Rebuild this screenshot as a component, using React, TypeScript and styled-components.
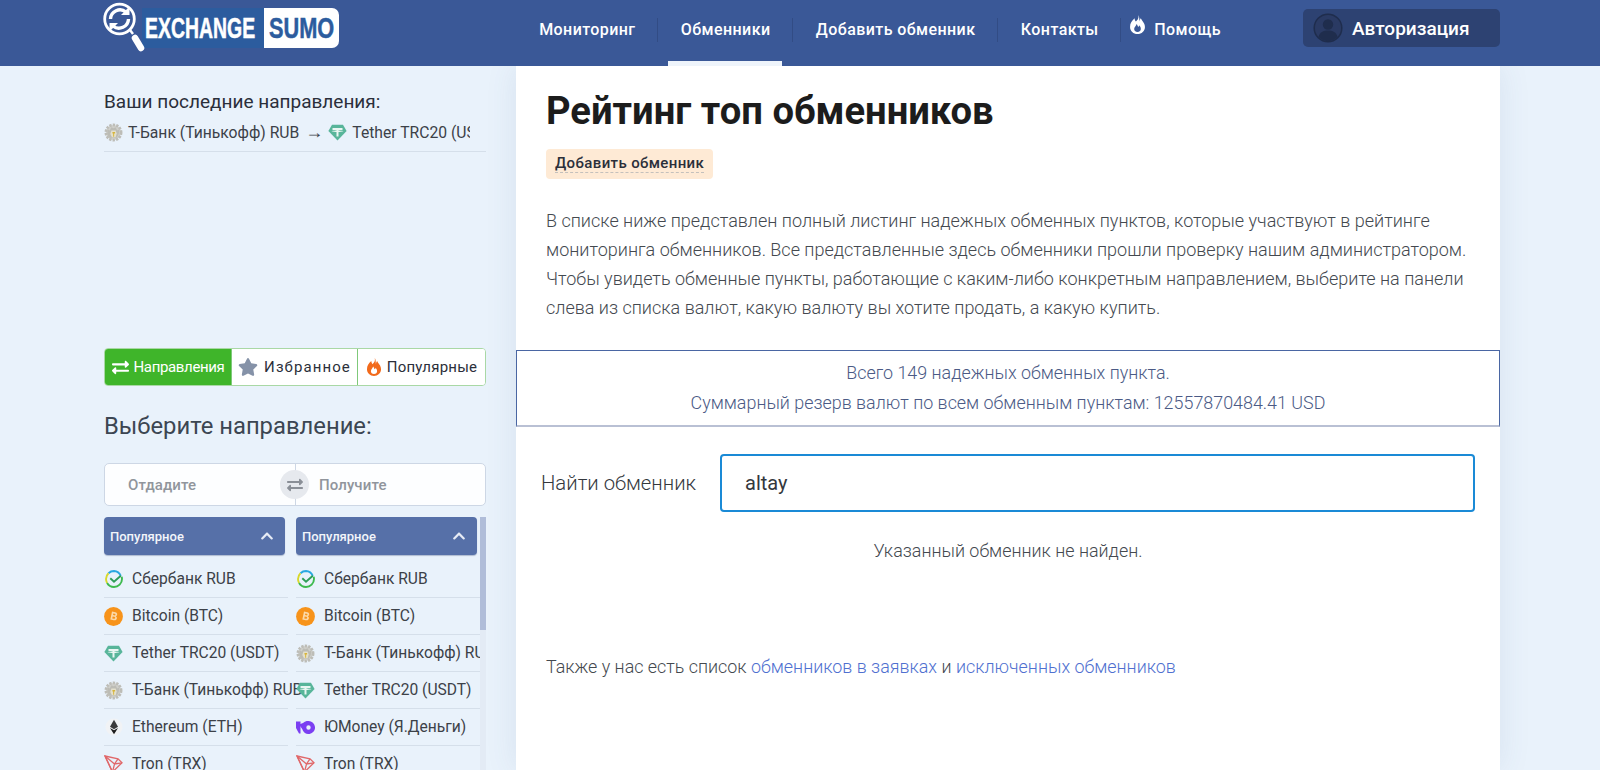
import React from "react";
import styled, { createGlobalStyle } from "styled-components";
import { FaExchangeAlt, FaStar, FaChevronUp } from "react-icons/fa";

const GlobalStyle = createGlobalStyle`
  html, body {
    margin: 0;
    padding: 0;
    height: 770px;
    overflow: hidden;
    background: #e9f2fb;
    font-family: Roboto, "Liberation Sans", sans-serif;
  }
  * { box-sizing: border-box; }
`;

const FireIcon = ({ size, color }: { size: number; color: string }) => (
  <svg width={size} height={size * 1.12} viewBox="3 1 18 23">
    <path
      fillRule="evenodd"
      fill={color}
      d="M13 1c1 4-1 6-3 8C9 7.500 8.500 6.500 8.500 5 5 8 3 11 3 15.500c0 5 4 8.500 9 8.500s9-3.500 9-8.500c0-5-3.500-7-5-10.500-1 1.500-1.500 2.500-1.500 4C14 6 14.500 3 13 1zM12 21.500c-2.500 0-4-1.500-4-3.500 0-2 2-3.500 3-6 1 1.500 1 2.500 2 3.500.5-.5 1-1 1-2 1.500 1.500 2 3 2 4.500 0 2-1.500 3.500-4 3.500z"
    />
  </svg>
);

const TinkoffIcon = () => (
  <svg width="19" height="19" viewBox="0 0 18 18">
    <circle cx="9" cy="9" r="7.200" fill="#cfcfca" stroke="#bdbdb7" strokeWidth="2.600" strokeDasharray="2.200 1.100" />
    <path d="M3.500 6l2 1L7 4l2 1 2-1 1.500 3 2-1-.5 4.500-2 3.500h-7l-2-3.500z" fill="#bcbcb5" />
    <path d="M7 7h4l1 3-1 3.500H7.500L6 10.500z" fill="#e4e0cc" />
    <path d="M8 8.500h2.500V10H9.600v3H8.700v-3H8z" fill="#d6b43a" />
  </svg>
);

const TetherIcon = () => (
  <svg width="19" height="17" viewBox="0 0 19 17">
    <path d="M4 .8h11l3.600 6.200L9.500 16.500.4 7z" fill="#58b59a" />
    <path d="M4.500 4h10v1.900h-4v6.600H8.500V5.900h-4z" fill="#eaf6f2" />
    <path d="M3.500 7.200c3-.8 9-.8 12 0-3 .9-9 .9-12 0z" fill="#eaf6f2" />
  </svg>
);

const SberIcon = () => (
  <svg width="18" height="18" viewBox="0 0 18 18" fill="none">
    <path d="M15.800 5.800A8 8 0 0 0 9 1a8 8 0 0 0-5.500 2.200" stroke="#2aa8e0" strokeWidth="1.900" />
    <path d="M3.500 3.200A8 8 0 0 0 1 9c0 1.500.4 2.900 1.100 4" stroke="#d8d82c" strokeWidth="1.900" />
    <path d="M2.100 13A8 8 0 0 0 9 17a8 8 0 0 0 8-8c0-.8-.1-1.500-.3-2.200" stroke="#3dba4e" strokeWidth="1.900" />
    <path d="M5.300 8.300L9 11.700l6.800-6" stroke="#2f9e58" strokeWidth="1.900" />
  </svg>
);

const BitcoinIcon = () => (
  <svg width="19" height="19" viewBox="0 0 19 19">
    <circle cx="9.500" cy="9.500" r="9.400" fill="#f7931a" />
    <path
      transform="rotate(12 9.500 9.500)"
      d="M7 5h3.400c1.500 0 2.300.8 2.300 2 0 .8-.4 1.400-1 1.700.9.300 1.500 1 1.500 2 0 1.500-1 2.300-2.700 2.300H7zm1.700 1.500v1.700h1.400c.6 0 .9-.3.900-.9s-.3-.8-.9-.8zm0 3.100v2h1.700c.7 0 1-.4 1-1s-.3-1-1-1z"
      fill="#fbd9a8"
    />
  </svg>
);

const EthereumIcon = () => (
  <svg width="18" height="18" viewBox="0 0 18 18">
    <circle cx="9" cy="9" r="8.500" fill="#f1f3f5" />
    <path d="M9 1.800l4 7-4 2.400-4-2.400z" fill="#3a3a3a" />
    <path d="M9 12.300l4-2.400-4 6.300-4-6.300z" fill="#1c1c1c" />
  </svg>
);

const TronIcon = () => (
  <svg width="19" height="18" viewBox="0 0 19 18" fill="none" stroke="#e0686a" strokeWidth="1.300">
    <path d="M1 1l13 2.800 4 4L8.500 17z" />
    <path d="M1 1l7.500 16M1 1l9.500 8 7.500-1.200M14 3.800l-3.500 5.200L8.500 17" />
  </svg>
);

const YooMoneyIcon = () => (
  <svg width="19" height="13" viewBox="0 0 19 13">
    <path d="M0 .5h4.500v12H3L0 7z" fill="#7b3ff2" />
    <path d="M12.500 0a6.500 6.500 0 1 1-6.300 8L3 3.500 7 2a6.500 6.500 0 0 1 5.500-2zm0 4.300a2.200 2.200 0 1 0 0 4.400 2.200 2.200 0 0 0 0-4.400z" fill="#7b3ff2" />
  </svg>
);

type Currency = { name: string; icon: React.ReactNode };

const sber: Currency = { name: "Сбербанк RUB", icon: <SberIcon /> };
const btc: Currency = { name: "Bitcoin (BTC)", icon: <BitcoinIcon /> };
const usdt: Currency = { name: "Tether TRC20 (USDT)", icon: <TetherIcon /> };
const tbank: Currency = { name: "Т-Банк (Тинькофф) RUB", icon: <TinkoffIcon /> };
const eth: Currency = { name: "Ethereum (ETH)", icon: <EthereumIcon /> };
const yoo: Currency = { name: "ЮMoney (Я.Деньги)", icon: <YooMoneyIcon /> };
const trx: Currency = { name: "Tron (TRX)", icon: <TronIcon /> };

const giveList = [sber, btc, usdt, tbank, eth, trx];
const getList = [sber, btc, tbank, usdt, yoo, trx];

const navItems = ["Мониторинг", "Обменники", "Добавить обменник", "Контакты"];

export default function App() {
  return (
    <>
      <GlobalStyle />
      <Header>
        <Logo>
          <LogoMark viewBox="0 0 56 58" fill="none">
            <circle cx="16.500" cy="19" r="14.800" fill="#3a5897" stroke="#fff" strokeWidth="2.800" />
            <path d="M7.500 19a9.500 9.500 0 0 1 15.500-7" stroke="#fff" strokeWidth="3.400" />
            <path d="M26.500 6.500v8.500H18z" fill="#fff" />
            <path d="M25.500 19a9.500 9.500 0 0 1-15.500 7" stroke="#fff" strokeWidth="3.400" />
            <path d="M6.500 31.500V23H15z" fill="#fff" />
            <path d="M27 30l3 4" stroke="#fff" strokeWidth="2.500" />
            <path d="M32 38l6 10" stroke="#fff" strokeWidth="6.500" strokeLinecap="round" />
          </LogoMark>
          <LogoBand>
            <LogoWord $scale={0.67}>EXCHANGE</LogoWord>
          </LogoBand>
          <LogoBox>
            <LogoWord $scale={0.75}>SUMO</LogoWord>
          </LogoBox>
        </Logo>
        <Nav>
          {navItems.map((item) => (
            <NavItem key={item} $active={item === "Обменники"}>
              {item}
            </NavItem>
          ))}
          <NavHelp>
            <FireIcon size={17} color="#fff" />
            Помощь
          </NavHelp>
        </Nav>
        <AuthButton>
          <Avatar viewBox="0 0 30 30" fill="none">
            <circle cx="15" cy="15" r="13.800" stroke="#1f2d4d" strokeWidth="1.500" fill="#2a3a63" />
            <circle cx="15" cy="11.500" r="5.200" fill="#1f2d4d" />
            <path d="M5.500 24c1-5 5-6.500 9.500-6.500s8.500 1.500 9.500 6.500a13 13 0 0 1-19 0z" fill="#1f2d4d" />
          </Avatar>
          Авторизация
        </AuthButton>
      </Header>
      <Page>
        <Sidebar>
          <LastTitle>Ваши последние направления:</LastTitle>
          <LastRoute>
            <LastRouteInner>
              <TinkoffIcon />
              <span>Т-Банк (Тинькофф) RUB</span>
              <Arrow>→</Arrow>
              <TetherIcon />
              <span>Tether TRC20 (USDT)</span>
            </LastRouteInner>
          </LastRoute>
          <Tabs>
            <Tab $active $width={127}>
              <FaExchangeAlt size={17} />
              Направления
            </Tab>
            <Tab $width={126} $spaced>
              <FaStar size={20} color="#8592a8" />
              Избранное
            </Tab>
            <Tab $flex>
              <FireIcon size={16} color="#f26a1b" />
              Популярные
            </Tab>
          </Tabs>
          <ChooseTitle>Выберите направление:</ChooseTitle>
          <Direction>
            <DirectionCell>Отдадите</DirectionCell>
            <DirectionCell $right>Получите</DirectionCell>
            <SwapCircle>
              <FaExchangeAlt size={16} />
            </SwapCircle>
          </Direction>
          <Columns>
            <Column>
              <Select>
                Популярное
                <FaChevronUp size={14} color="#e6ebf5" />
              </Select>
              {giveList.map((c) => (
                <CurrencyRow key={c.name}>
                  <CurrencyIcon>{c.icon}</CurrencyIcon>
                  <span>{c.name}</span>
                </CurrencyRow>
              ))}
            </Column>
            <Column $clip>
              <Select>
                Популярное
                <FaChevronUp size={14} color="#e6ebf5" />
              </Select>
              {getList.map((c) => (
                <CurrencyRow key={c.name}>
                  <CurrencyIcon>{c.icon}</CurrencyIcon>
                  <span>{c.name}</span>
                </CurrencyRow>
              ))}
            </Column>
            <Scrollbar>
              <ScrollThumb />
            </Scrollbar>
          </Columns>
        </Sidebar>
        <Main>
          <Intro>
            <Title>Рейтинг топ обменников</Title>
            <Badge>
              <BadgeText>Добавить обменник</BadgeText>
            </Badge>
            <Paragraph>
              В списке ниже представлен полный листинг надежных обменных пунктов, которые участвуют в рейтинге
              мониторинга обменников. Все представленные здесь обменники прошли проверку нашим администратором.
              Чтобы увидеть обменные пункты, работающие с каким-либо конкретным направлением, выберите на панели
              слева из списка валют, какую валюту вы хотите продать, а какую купить.
            </Paragraph>
          </Intro>
          <InfoBox>
            <div>Всего 149 надежных обменных пункта.</div>
            <div>Суммарный резерв валют по всем обменным пунктам: 12557870484.41 USD</div>
          </InfoBox>
          <SearchRow>
            <SearchLabel>Найти обменник</SearchLabel>
            <SearchInput defaultValue="altay" />
          </SearchRow>
          <NotFound>Указанный обменник не найден.</NotFound>
          <Footnote>
            Также у нас есть список <FootLink>обменников в заявках</FootLink> и{" "}
            <FootLink>исключенных обменников</FootLink>
          </Footnote>
        </Main>
      </Page>
    </>
  );
}

const Header = styled.header`
  position: relative;
  z-index: 2;
  height: 66px;
  background: #3a5897;
  display: flex;
  align-items: flex-start;
  padding: 0 100px 0 103px;
`;

const Logo = styled.div`
  position: relative;
  width: 236px;
  height: 60px;
  display: flex;
  align-items: flex-start;
  padding: 8px 0 0 39px;
  flex-shrink: 0;
`;

const LogoMark = styled.svg`
  position: absolute;
  left: 0;
  top: 0;
  width: 56px;
  height: 58px;
  z-index: 1;
`;

const LogoBand = styled.div`
  height: 40px;
  width: 122px;
  background: #2c5c9e;
  color: #fff;
  padding-left: 3px;
`;

const LogoBox = styled.div`
  height: 40px;
  width: 75px;
  background: #fff;
  color: #2c5c9e;
  border-radius: 0 7px 7px 0;
  padding-left: 5px;
`;

const LogoWord = styled.span<{ $scale: number }>`
  display: inline-block;
  font-family: "Liberation Sans", sans-serif;
  font-weight: 700;
  font-size: 29px;
  line-height: 40px;
  white-space: nowrap;
  -webkit-text-stroke: 0.5px currentColor;
  transform: scaleX(${(p) => p.$scale});
  transform-origin: left center;
`;

const Nav = styled.nav`
  display: flex;
  height: 66px;
  margin-left: 177.500px;
`;

const NavItem = styled.div<{ $active?: boolean }>`
  position: relative;
  height: 66px;
  padding: 0 22.700px 8px;
  display: flex;
  align-items: center;
  color: #fff;
  font-size: 16px;
  font-weight: 500;
  letter-spacing: 0.42px;
  white-space: nowrap;
  &::after {
    content: "";
    position: absolute;
    right: 0;
    top: 18px;
    height: 24px;
    width: 1px;
    background: #324c85;
  }
  ${(p) =>
    p.$active &&
    `&::before {
      content: "";
      position: absolute;
      left: 10px;
      right: 11px;
      bottom: 0;
      height: 5px;
      background: #eef4fb;
    }`}
`;

const NavHelp = styled.div`
  height: 66px;
  padding: 0 0 8px 8px;
  display: flex;
  align-items: center;
  gap: 8px;
  color: #fff;
  font-size: 16px;
  font-weight: 500;
  letter-spacing: 0.42px;
  svg {
    margin-top: -8px;
  }
`;

const AuthButton = styled.div`
  margin-left: auto;
  margin-top: 9px;
  width: 197px;
  height: 38px;
  background: #2d4272;
  border-radius: 5px;
  display: flex;
  align-items: center;
  gap: 9px;
  padding-left: 10px;
  color: #fff;
  font-size: 19px;
  font-weight: 500;
  white-space: nowrap;
`;

const Avatar = styled.svg`
  width: 30px;
  height: 30px;
  flex-shrink: 0;
`;

const Page = styled.div`
  display: flex;
  height: 704px;
  overflow: hidden;
  padding-left: 104px;
  gap: 30px;
`;

const Sidebar = styled.aside`
  width: 382px;
  flex-shrink: 0;
  padding-top: 26px;
`;

const LastTitle = styled.div`
  font-size: 19px;
  line-height: 20px;
  color: #2b2f3a;
`;

const LastRoute = styled.div`
  margin-top: 9px;
  height: 31px;
  border-bottom: 1px solid #d5dfea;
`;

const LastRouteInner = styled.div`
  width: 366px;
  height: 22px;
  overflow: hidden;
  display: flex;
  align-items: center;
  gap: 5px;
  font-size: 15.700px;
  color: #3c4148;
  white-space: nowrap;
  svg {
    flex-shrink: 0;
  }
`;

const Arrow = styled.span`
  font-size: 18px;
  margin: 0 0 0 1px;
`;

const Tabs = styled.div`
  margin-top: 196px;
  height: 38px;
  display: flex;
  border: 1px solid #a9d8a5;
  border-radius: 4px;
  background: #fff;
  overflow: hidden;
`;

const Tab = styled.div<{ $active?: boolean; $width?: number; $flex?: boolean; $spaced?: boolean }>`
  ${(p) => (p.$flex ? "flex: 1;" : `width: ${p.$width}px;`)}
  display: flex;
  align-items: center;
  justify-content: center;
  gap: ${(p) => (p.$spaced ? 6 : 5)}px;
  font-size: 15px;
  white-space: nowrap;
  letter-spacing: ${(p) => (p.$spaced ? "1.1px" : p.$active ? "-0.35px" : "0.2px")};
  color: ${(p) => (p.$active ? "#fff" : "#2b2f3a")};
  background: ${(p) => (p.$active ? "#3fb52a" : "#fff")};
  border-right: ${(p) => (p.$flex ? "none" : "1px solid #7fc97a")};
`;

const ChooseTitle = styled.div`
  margin-top: 25px;
  font-size: 23.800px;
  line-height: 30px;
  color: #3c4652;
`;

const Direction = styled.div`
  position: relative;
  margin-top: 22px;
  height: 43px;
  display: grid;
  grid-template-columns: 190px 1fr;
  background: #fdfeff;
  border: 1px solid #cdd7e5;
  border-radius: 5px;
`;

const DirectionCell = styled.div<{ $right?: boolean }>`
  display: flex;
  align-items: center;
  padding-left: 23px;
  font-size: 15px;
  font-weight: 500;
  letter-spacing: 0.1px;
  color: #90959c;
  border-left: ${(p) => (p.$right ? "1px solid #cdd7e5" : "none")};
`;

const SwapCircle = styled.div`
  position: absolute;
  left: 175px;
  top: 6px;
  width: 29px;
  height: 29px;
  border-radius: 50%;
  background: #e6e9ee;
  color: #8a8f97;
  display: flex;
  align-items: center;
  justify-content: center;
`;

const Columns = styled.div`
  position: relative;
  margin-top: 11px;
  display: grid;
  grid-template-columns: 181px 181px;
  column-gap: 11px;
`;

const Column = styled.div<{ $clip?: boolean }>`
  min-width: 0;
  ${(p) => p.$clip && "overflow: hidden; margin-right: -3px;"}
`;

const Select = styled.div`
  width: 181px;
  height: 38px;
  background: #5670a8;
  border-radius: 4px;
  padding: 0 8px 0 6px;
  display: flex;
  align-items: center;
  justify-content: space-between;
  color: #f2f5fa;
  font-size: 13px;
  font-weight: 500;
  box-shadow: 0 1px 1px rgba(40, 60, 110, 0.3);
  margin-bottom: 6px;
  svg {
    margin-right: 3px;
  }
`;

const CurrencyRow = styled.div`
  width: 184px;
  height: 37px;
  display: flex;
  align-items: center;
  gap: 9px;
  border-bottom: 1px solid #d5dfea;
  font-size: 15.600px;
  color: #3c4148;
  white-space: nowrap;
`;

const CurrencyIcon = styled.span`
  width: 19px;
  display: flex;
  align-items: center;
  justify-content: center;
  flex-shrink: 0;
`;

const Scrollbar = styled.div`
  position: absolute;
  right: 0;
  top: 0;
  bottom: 0;
  width: 6px;
  background: #e3ebf5;
`;

const ScrollThumb = styled.div`
  height: 113px;
  background: #b0bdd9;
`;

const Main = styled.main`
  width: 984px;
  flex-shrink: 0;
  background: #fff;
  box-shadow: 0 0 30px rgba(60, 90, 140, 0.1);
  padding-top: 20px;
`;

const Intro = styled.div`
  padding: 0 30px;
`;

const Title = styled.h1`
  margin: 0;
  font-size: 38.200px;
  line-height: 50px;
  font-weight: 700;
  color: #1c1c1c;
`;

const Badge = styled.div`
  display: inline-flex;
  align-items: center;
  margin-top: 13px;
  height: 30px;
  padding: 0 9px;
  background: #feead5;
  border-radius: 4px;
`;

const BadgeText = styled.span`
  font-size: 15px;
  font-weight: 500;
  letter-spacing: 0.37px;
  color: #2b2f3a;
  line-height: 17px;
  border-bottom: 1px dashed #c4c0bc;
`;

const Paragraph = styled.p`
  margin: 27px 0 0;
  width: 930px;
  font-size: 18px;
  font-weight: 300;
  line-height: 29px;
  color: #44494f;
`;

const InfoBox = styled.div`
  margin-top: 28px;
  height: 77px;
  border: 1px solid #4a66a3;
  border-bottom: 2px solid #b9c0d4;
  display: flex;
  flex-direction: column;
  align-items: center;
  justify-content: center;
  font-size: 17.900px;
  font-weight: 300;
  line-height: 30px;
  color: #4b5a85;
`;

const SearchRow = styled.div`
  margin-top: 27px;
  padding: 0 25px;
  display: flex;
  align-items: center;
`;

const SearchLabel = styled.label`
  width: 179px;
  font-size: 20.300px;
  font-weight: 300;
  color: #34383d;
`;

const SearchInput = styled.input`
  flex: 1;
  height: 58px;
  border: 2px solid #1a8ad6;
  border-radius: 4px;
  padding: 0 23px;
  font-family: Roboto, "Liberation Sans", sans-serif;
  font-size: 20px;
  color: #34383d;
  outline: none;
`;

const NotFound = styled.div`
  margin-top: 27px;
  text-align: center;
  font-size: 17.900px;
  font-weight: 300;
  line-height: 24px;
  color: #44494f;
`;

const Footnote = styled.div`
  margin-top: 92px;
  padding-left: 30px;
  font-size: 17.900px;
  font-weight: 300;
  line-height: 24px;
  color: #44494f;
`;

const FootLink = styled.a`
  color: #4f70d0;
`;
